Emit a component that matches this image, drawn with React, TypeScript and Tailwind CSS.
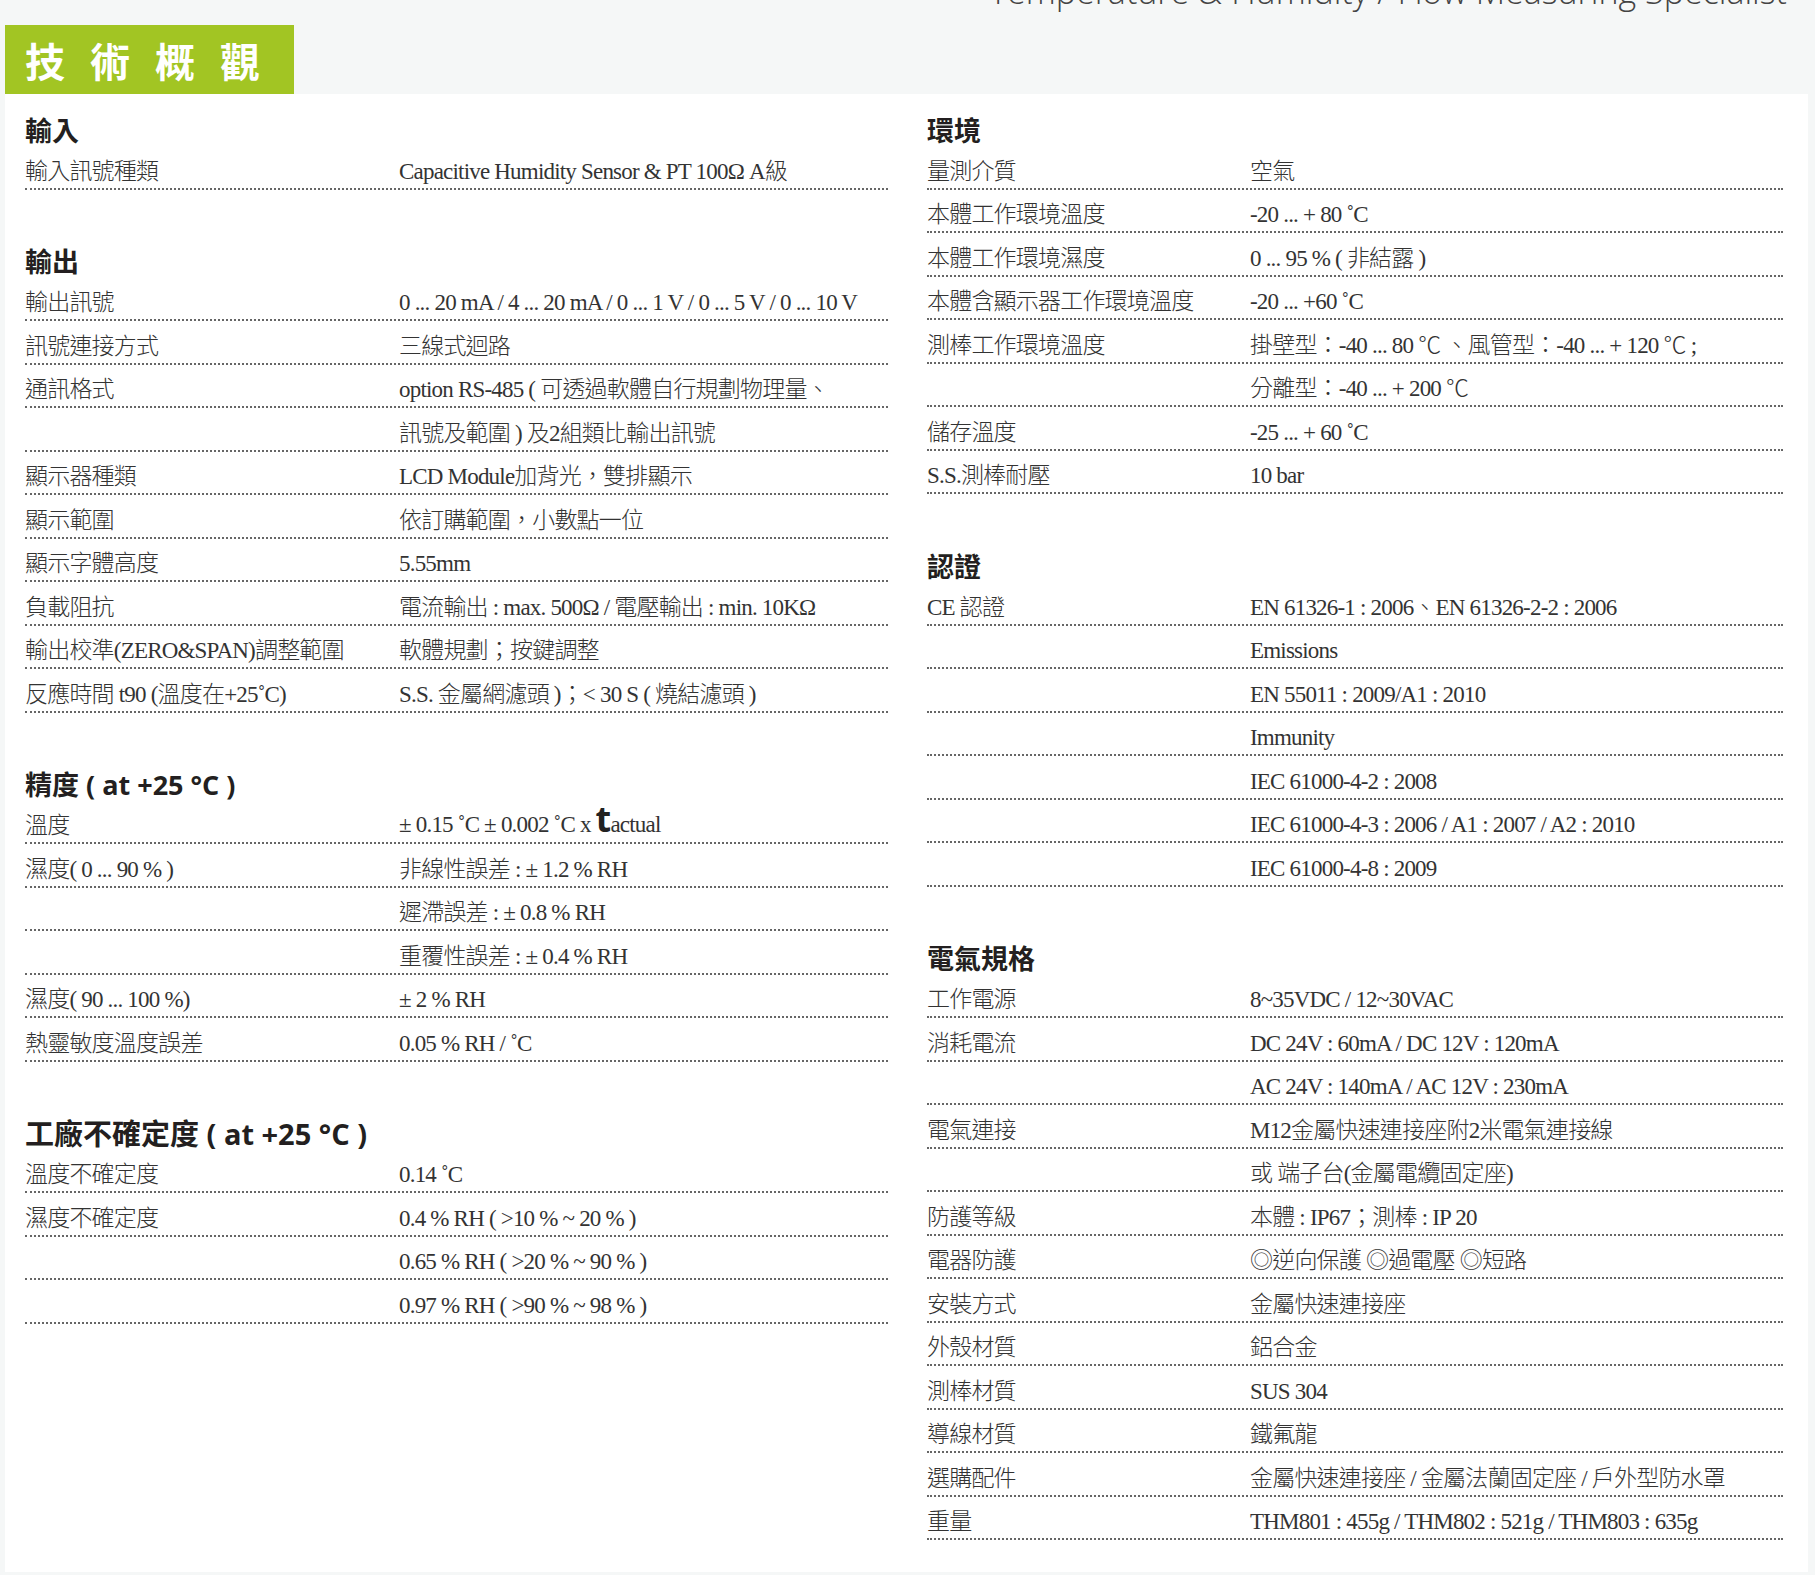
import React from "react";

type Row = [string, React.ReactNode];
type Section = { title: React.ReactNode; rows: Row[]; big?: boolean };

const serif = { fontFamily: '"Liberation Serif","Noto Sans CJK TC",serif' };
const head = { fontFamily: '"Open Sans","Noto Sans CJK TC",sans-serif' };

const left: Section[] = [
  { title: "輸入", rows: [["輸入訊號種類", "Capacitive Humidity Sensor & PT 100Ω  A級"]] },
  {
    title: "輸出",
    rows: [
      ["輸出訊號", "0 ... 20 mA / 4 ... 20 mA / 0 ... 1 V / 0 ... 5 V / 0 ... 10 V"],
      ["訊號連接方式", "三線式迴路"],
      ["通訊格式", "option RS-485 ( 可透過軟體自行規劃物理量、"],
      ["", "訊號及範圍 ) 及2組類比輸出訊號"],
      ["顯示器種類", "LCD Module加背光，雙排顯示"],
      ["顯示範圍", "依訂購範圍，小數點一位"],
      ["顯示字體高度", "5.55mm"],
      ["負載阻抗", "電流輸出 : max. 500Ω / 電壓輸出 : min. 10KΩ"],
      ["輸出校準(ZERO&SPAN)調整範圍", "軟體規劃；按鍵調整"],
      ["反應時間 t90 (溫度在+25˚C)", "S.S. 金屬網濾頭 )；< 30 S ( 燒結濾頭 )"],
    ],
  },
  {
    title: "精度 ( at +25 °C )",
    rows: [
      [
        "溫度",
        <span>
          ± 0.15 ˚C ± 0.002 ˚C x{" "}
          <span className="text-[36px] font-bold leading-none text-[#222]" style={{ fontFamily: '"Open Sans",sans-serif' }}>t</span>
          actual
        </span>,
      ],
      ["濕度( 0 ... 90 % )", "非線性誤差 : ± 1.2 % RH"],
      ["", "遲滯誤差 : ± 0.8 % RH"],
      ["", "重覆性誤差 : ± 0.4 % RH"],
      ["濕度( 90 ... 100 %)", "± 2 % RH"],
      ["熱靈敏度溫度誤差", "0.05 % RH / ˚C"],
    ],
  },
  {
    title: "工廠不確定度 ( at +25 °C )",
    big: true,
    rows: [
      ["溫度不確定度", "0.14 ˚C"],
      ["濕度不確定度", "0.4    % RH ( >10 % ~ 20 % )"],
      ["", "0.65 % RH ( >20 % ~ 90 % )"],
      ["", "0.97 % RH ( >90 % ~ 98 % )"],
    ],
  },
];

const right: Section[] = [
  {
    title: "環境",
    rows: [
      ["量測介質", "空氣"],
      ["本體工作環境溫度", "-20 ... + 80 ˚C"],
      ["本體工作環境濕度", "0 ... 95 % ( 非結露 )"],
      ["本體含顯示器工作環境溫度", "-20 ... +60 ˚C"],
      ["測棒工作環境溫度", "掛壁型：-40 ... 80 ℃ 、風管型：-40 ... + 120 ℃ ;"],
      ["", "分離型：-40 ... + 200 ℃"],
      ["儲存溫度", "-25 ... + 60 ˚C"],
      ["S.S.測棒耐壓", "10 bar"],
    ],
  },
  {
    title: "認證",
    rows: [
      ["CE 認證", "EN 61326-1 : 2006、EN 61326-2-2 : 2006"],
      ["", "Emissions"],
      ["", "EN 55011 : 2009/A1 : 2010"],
      ["", "Immunity"],
      ["", "IEC 61000-4-2 : 2008"],
      ["", "IEC 61000-4-3 : 2006 / A1 : 2007 / A2 : 2010"],
      ["", "IEC 61000-4-8 : 2009"],
    ],
  },
  {
    title: "電氣規格",
    rows: [
      ["工作電源", "8~35VDC / 12~30VAC"],
      ["消耗電流", "DC 24V : 60mA / DC 12V : 120mA"],
      ["", "AC 24V : 140mA / AC 12V : 230mA"],
      ["電氣連接", "M12金屬快速連接座附2米電氣連接線"],
      ["", "或 端子台(金屬電纜固定座)"],
      ["防護等級", "本體 : IP67；測棒 : IP 20"],
      ["電器防護", "◎逆向保護 ◎過電壓 ◎短路"],
      ["安裝方式", "金屬快速連接座"],
      ["外殼材質", "鋁合金"],
      ["測棒材質", "SUS 304"],
      ["導線材質", "鐵氟龍"],
      ["選購配件", "金屬快速連接座 / 金屬法蘭固定座 / 戶外型防水罩"],
      ["重量", "THM801 : 455g / THM802 :  521g  /  THM803 : 635g"],
    ],
  },
];

function Col({ sections, labelW }: { sections: Section[]; labelW: string }) {
  return (
    <div className="flex flex-col gap-[56px]">
      {sections.map((s, i) => (
        <div key={i}>
          <div
            className={`h-[32px] flex items-center font-bold text-[#231f20] leading-none ${s.big ? "text-[29px]" : "text-[27px]"}`}
            style={head}
          >
            {s.title}
          </div>
          {s.rows.map((r, j) => (
            <div
              key={j}
              className="h-[43.5px] flex items-end pb-[5px] border-b-2 border-dotted border-[#666] text-[23px] font-light text-[#333] whitespace-nowrap tracking-[-0.8px] leading-none"
              style={serif}
            >
              <div className={labelW}>{r[0]}</div>
              <div>{r[1]}</div>
            </div>
          ))}
        </div>
      ))}
    </div>
  );
}

export default function App() {
  return (
    <div className="w-[1815px] h-[1575px] bg-[#f5f7f7] overflow-hidden">
      <div className="h-[94px] flex items-start justify-between">
        <div
          className="mt-[25px] ml-[5px] w-[289px] h-[69px] bg-[#a2c523] flex items-center pl-[20px] text-white text-[40px] font-bold tracking-[25px]"
          style={{ fontFamily: '"Noto Sans CJK TC",sans-serif' }}
        >
          技術概觀
        </div>
        <div className="-mt-[34px] mr-[28px] text-[34px] text-[#444] font-light" style={{ fontFamily: '"Open Sans",sans-serif' }}>
          Temperature &amp; Humidity / Flow Measuring Specialist
        </div>
      </div>
      <div className="ml-[5px] w-[1803px] h-[1478px] bg-white pt-[20px] flex">
        <div className="ml-[20px] w-[863px]">
          <Col sections={left} labelW="w-[374px]" />
        </div>
        <div className="ml-[39px] w-[856px]">
          <Col sections={right} labelW="w-[323px]" />
        </div>
      </div>
    </div>
  );
}
